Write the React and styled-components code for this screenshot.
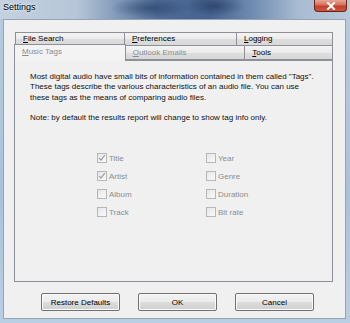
import React from 'react';
import styled, { createGlobalStyle } from 'styled-components';

const GlobalStyle = createGlobalStyle`
  html, body {
    margin: 0;
    padding: 0;
    overflow: hidden;
    background: #ffffff;
  }

  * {
    box-sizing: border-box;
  }
`;

const Window = styled.div`
  width: 350px;
  height: 323px;
  display: flex;
  flex-direction: column;
  background: linear-gradient(to bottom, #b7cbe0, #a9c2dc 60%, #b9cfe4);
  font-family: "Liberation Sans", Arial, sans-serif;
`;

const TitleBar = styled.div`
  height: 19px;
  display: flex;
  align-items: flex-start;
  padding-left: 3px;
  background:
    radial-gradient(ellipse 40px 10px at 150px 8px, rgba(30, 52, 92, 0.55), transparent),
    radial-gradient(ellipse 30px 10px at 215px 6px, rgba(30, 52, 92, 0.6), transparent),
    linear-gradient(to right, #c4d1df 0%, #b6c6d8 22%, #7f97b8 34%, #4f6d98 45%, #45638f 60%, #6f8bb1 72%, #a8bbd1 85%, #b9c9db 100%);
`;

const Title = styled.div`
  font-size: 9px;
  line-height: 14px;
  color: #000;
  text-shadow: 0 0 4px #eef3f8, 0 0 2px #eef3f8;
`;

const CloseButton = styled.div`
  margin-left: auto;
  margin-right: 3px;
  width: 33px;
  height: 12px;
  border: 1px solid #6b2318;
  border-top: none;
  border-radius: 0 0 4px 4px;
  background: linear-gradient(to bottom, #e8a598 0%, #d7705c 45%, #c2402a 55%, #d0563f 100%);
  display: flex;
  align-items: center;
  justify-content: center;
`;

const Client = styled.div`
  flex: 1;
  margin: 0 4px 4px 3px;
  background: #f0f0f0;
  border: 1px solid #93a3b8;
  padding: 12px 0 0 10px;
  display: flex;
  flex-direction: column;
`;

const TabControl = styled.div`
  width: 319px;
  display: flex;
  flex-direction: column;
`;

const TabRow = styled.div`
  display: flex;
  height: ${({ $height }) => $height}px;
  padding-left: ${({ $inset }) => $inset}px;
  position: relative;
  z-index: 1;
`;

const Tab = styled.div`
  width: ${({ $width }) => $width}px;
  height: ${({ $selected, $height }) => ($selected ? $height + 2 : $height)}px;
  margin-top: ${({ $selected }) => ($selected ? -1 : 0)}px;
  margin-left: -1px;
  &:first-child {
    margin-left: 0;
  }
  border: 1px solid #8e9097;
  border-bottom: ${({ $selected }) => ($selected ? 'none' : '1px solid #8e9097')};
  background: ${({ $selected }) => ($selected
    ? '#f3f3f3'
    : 'linear-gradient(to bottom, #f4f4f4 0%, #ebebeb 50%, #dedede 51%, #d8d8d8 100%)')};
  padding-left: 7px;
  font-size: 8px;
  line-height: ${({ $height }) => $height - 2}px;
  color: ${({ $dim }) => ($dim ? '#8d8d8d' : '#000')};
  white-space: nowrap;
  position: relative;
  z-index: ${({ $selected }) => ($selected ? 2 : 0)};
`;

const Panel = styled.div`
  height: 222px;
  border: 1px solid #8e9097;
  background: #f0f0f0;
  padding: 11px 0 0 15px;
`;

const Paragraph = styled.p`
  margin: 0;
  font-size: 8px;
  line-height: 10.3px;
  color: #111;
  white-space: nowrap;
  & + & {
    margin-top: 10.3px;
  }
`;

const TagGrid = styled.div`
  margin: 26px 0 0 67px;
  display: grid;
  grid-template-columns: 109px 109px;
  grid-auto-rows: 18px;
`;

const TagOption = styled.label`
  display: flex;
  align-items: center;
  gap: 2px;
  font-size: 8px;
  color: #8d8d8d;
`;

const Box = styled.span`
  width: 10px;
  height: 10px;
  border: 1px solid #b7b7b7;
  background: linear-gradient(135deg, #e6e6e6, #fafafa);
  display: flex;
  align-items: center;
  justify-content: center;
`;

const ButtonRow = styled.div`
  display: flex;
  gap: 18px;
  margin-top: 11px;
  padding-left: 27px;
`;

const Button = styled.div`
  width: 79px;
  height: 18px;
  border: 1px solid #707070;
  border-radius: 2px;
  box-shadow: inset 0 0 0 1px #fbfbfb;
  background: linear-gradient(to bottom, #f3f3f3 0%, #ebebeb 50%, #dddddd 51%, #cfcfcf 100%);
  font-size: 8px;
  color: #000;
  display: flex;
  align-items: center;
  justify-content: center;
`;

const Check = () => (
  <svg width="8" height="8" viewBox="0 0 8 8">
    <path d="M1.2 4.2 L3 6.2 L6.8 1.2" fill="none" stroke="#9a9a9a" strokeWidth="1.1" />
  </svg>
);

const Checkbox = ({ label, checked }) => (
  <TagOption>
    <Box>{checked && <Check />}</Box>
    {label}
  </TagOption>
);

const backTabs = [
  { key: 'file', width: 110, accel: 'F', rest: 'ile Search' },
  { key: 'pref', width: 113, accel: 'P', rest: 'references' },
  { key: 'log', width: 97, accel: 'L', rest: 'ogging' },
];

const frontTabs = [
  { key: 'music', width: 112, accel: 'M', rest: 'usic Tags', dim: true, selected: true },
  { key: 'outlook', width: 121, accel: 'O', rest: 'utlook Emails', dim: true },
  { key: 'tools', width: 89, accel: 'T', rest: 'ools' },
];

const tags = [
  ['Title', true], ['Year', false],
  ['Artist', true], ['Genre', false],
  ['Album', false], ['Duration', false],
  ['Track', false], ['Bit rate', false],
];

const App = () => (
  <>
    <GlobalStyle />
    <Window>
      <TitleBar>
        <Title>Settings</Title>
        <CloseButton>
          <svg width="10" height="8" viewBox="0 0 10 8">
            <path d="M2 1 L8 7 M8 1 L2 7" stroke="#ffffff" strokeWidth="2" strokeLinecap="square" />
          </svg>
        </CloseButton>
      </TitleBar>
      <Client>
        <TabControl>
          <TabRow $height={13} $inset={1}>
            {backTabs.map(t => (
              <Tab key={t.key} $width={t.width} $height={14}>
                <u>{t.accel}</u>{t.rest}
              </Tab>
            ))}
          </TabRow>
          <TabRow $height={15} $inset={0}>
            {frontTabs.map(t => (
              <Tab key={t.key} $width={t.width} $height={15} $dim={t.dim} $selected={t.selected}>
                <u>{t.accel}</u>{t.rest}
              </Tab>
            ))}
          </TabRow>
          <Panel>
            <Paragraph>
              Most digital audio have small bits of information contained in them called "Tags".<br />
              These tags describe the various characteristics of an audio file. You can use<br />
              these tags as the means of comparing audio files.
            </Paragraph>
            <Paragraph>
              Note: by default the results report will change to show tag info only.
            </Paragraph>
            <TagGrid>
              {tags.map(([label, checked]) => (
                <Checkbox key={label} label={label} checked={checked} />
              ))}
            </TagGrid>
          </Panel>
        </TabControl>
        <ButtonRow>
          <Button>Restore Defaults</Button>
          <Button>OK</Button>
          <Button>Cancel</Button>
        </ButtonRow>
      </Client>
    </Window>
  </>
);

export default App;
